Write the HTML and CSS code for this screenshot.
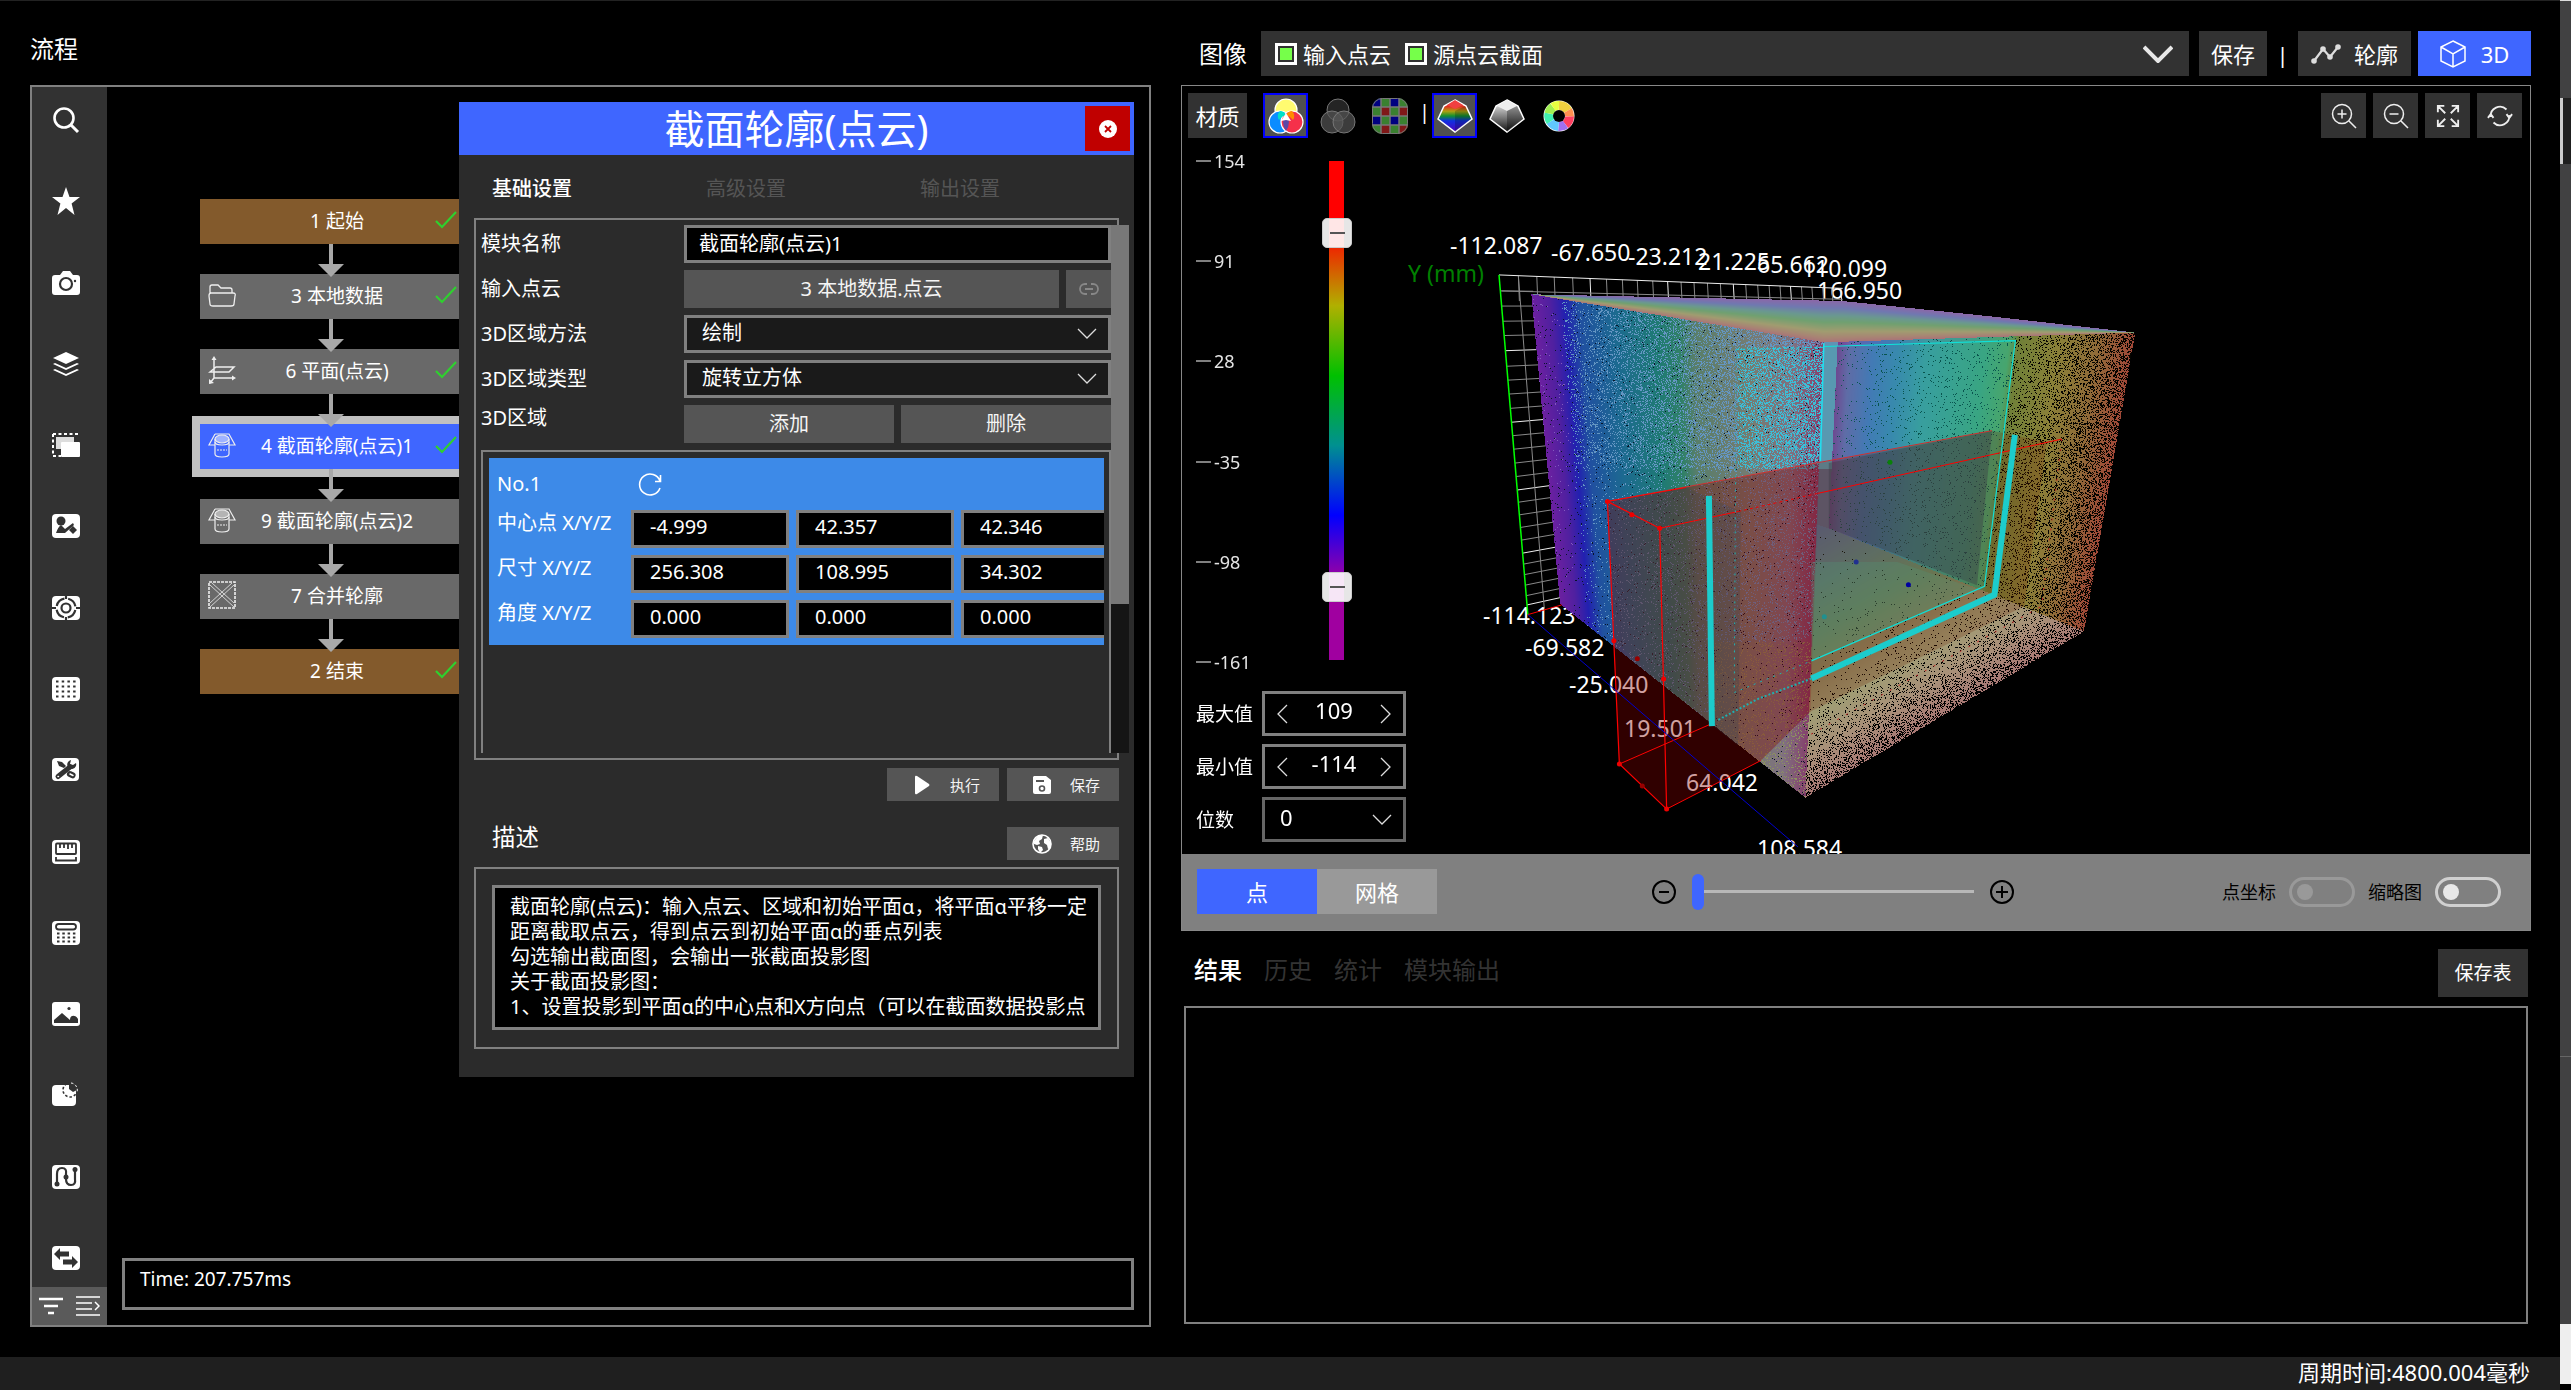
FILE: index.html
```html
<!DOCTYPE html>
<html lang="zh-CN">
<head>
<meta charset="utf-8">
<title>流程</title>
<link rel="stylesheet" href="styles.css">
</head>
<body>
<svg class="defs" aria-hidden="true">
  <symbol id="tick" viewBox="0 0 22 18"><path d="M1 10l6 6L21 1" fill="none" stroke="#2fd02f" stroke-width="2.200"/></symbol>
  <symbol id="arrow" viewBox="0 0 26 33"><path d="M11 0h4v20h11L13 33 0 20h11z" fill="#a8a8a8"/></symbol>
  <symbol id="chev" viewBox="0 0 20 12"><path d="M1 1l9 9 9-9" fill="none" stroke="#ddd" stroke-width="1.3"/></symbol>
  <symbol id="section" viewBox="0 0 28 28"><g fill="none" stroke="#eee" stroke-width="1.2"><path d="M7 3h14l6 11h-6M7 3L1 14h6"/><ellipse cx="14" cy="8" rx="7" ry="4" fill="#fff" fill-opacity=".5"/><path d="M7 8v15c0 4 14 4 14 0V8"/><path d="M7 11c0 4 14 4 14 0"/><path d="M9 19h10" stroke-dasharray="2 1"/></g></symbol>
</svg>
<div class="app">
  <div class="main">
    <div class="work">
      <section class="left">
        <h1 class="page-title">流程</h1>
        <div class="flow-panel">
          <nav class="sidebar">
            <div class="tools">
              <button aria-label="搜索"><svg viewBox="0 0 28 28"><circle cx="12" cy="12" r="9.5" fill="none" stroke="#fff" stroke-width="2.6"/><path d="M19 19l7 7" stroke="#fff" stroke-width="3"/></svg></button>
              <button aria-label="收藏"><svg viewBox="0 0 28 28"><path d="M14 0l3.500 10H28l-8.400 6.500L22.500 28 14 21 5.500 28l2.900-11.500L0 10h10.500z" fill="#fff"/></svg></button>
              <button aria-label="相机"><svg viewBox="0 0 28 28"><path d="M3 6h5l3-4h7l3 4h4q3 0 3 3v14q0 3-3 3H3q-3 0-3-3V9q0-3 3-3z" fill="#fff"/><circle cx="14" cy="15" r="6" fill="none" stroke="#323232" stroke-width="2.200"/><circle cx="23" cy="12" r="1.200" fill="#323232"/></svg></button>
              <button aria-label="图层"><svg viewBox="0 0 28 28"><path d="M14 2l13 6-13 6L1 8z" fill="#fff"/><path d="M3 13l11 5 11-5 2 1-13 6-13-6zM3 19l11 5 11-5 2 1-13 6-13-6z" fill="#fff"/></svg></button>
              <button aria-label="区域"><svg viewBox="0 0 28 28"><path d="M1 3h25M1 3v22h8" fill="none" stroke="#fff" stroke-width="2" stroke-dasharray="3 2.500"/><path d="M4 6h18v12H4z" fill="#ddd"/><rect x="9" y="11" width="19" height="15" rx="1" fill="#fff"/></svg></button>
              <button aria-label="定位"><svg viewBox="0 0 28 28"><rect y="2" width="28" height="24" rx="4" fill="#fff"/><g fill="#323232"><circle cx="9" cy="9" r="4.500"/><path d="M4 21q2-6 5-8l4 4 8-6 1 2-9 8zM17 18l4-4 4 4-4 4z"/></g></svg></button>
              <button aria-label="目标"><svg viewBox="0 0 28 28"><rect y="2" width="28" height="24" rx="4" fill="#fff"/><g fill="none" stroke="#323232" stroke-width="2.200"><circle cx="14" cy="14" r="4.500"/><circle cx="14" cy="14" r="9.500" stroke-dasharray="11 3.900" stroke-dashoffset="-2"/><path d="M14 2v3M14 23v3M0 14h4M24 14h4"/></g></svg></button>
              <button aria-label="阵列"><svg viewBox="0 0 28 28"><rect y="2" width="28" height="24" rx="4" fill="#fff"/><path d="M4 6.500h20M4 11.500h20M4 16.500h20M4 21.500h20" stroke="#323232" stroke-width="2.200" stroke-dasharray="2.500 3.200"/></svg></button>
              <button aria-label="工具"><svg viewBox="0 0 28 28"><rect y="2" width="27" height="23" rx="4" fill="#fff"/><path d="M5 5l5 1 4 4-2 2-5-2z" fill="#323232"/><path d="M6 20.500L18 11" stroke="#323232" stroke-width="5" stroke-linecap="round"/><path d="M24 7a4.500 4.500 0 1 1-5-3l-1 4 3 1z" fill="#323232"/><rect x="15" y="15.500" width="9" height="6" rx="3" transform="rotate(25 19 18)" fill="#323232"/><path d="M18 18l3 1.500M6 20.500h.5" stroke="#fff" stroke-width="1.500" stroke-linecap="round"/></svg></button>
              <button aria-label="测量"><svg viewBox="0 0 28 28"><rect y="2" width="28" height="24" rx="4" fill="#fff"/><g fill="none" stroke="#323232" stroke-width="1.800"><rect x="4" y="5.500" width="20" height="10.500" rx="1"/><path d="M8 6v4M12 6v4M16 6v5M20 6v4M4 19v3.500h20V19"/></g></svg></button>
              <button aria-label="计算"><svg viewBox="0 0 28 28"><rect y="2" width="28" height="24" rx="4" fill="#fff"/><rect x="4" y="5" width="20" height="5.500" rx="2.700" fill="none" stroke="#323232" stroke-width="1.800"/><path d="M5 14.500h19M5 18.500h19M5 22.500h19" stroke="#323232" stroke-width="2.200" stroke-dasharray="2.500 2.800"/></svg></button>
              <button aria-label="图片"><svg viewBox="0 0 28 28"><rect y="2" width="28" height="24" rx="3" fill="#fff"/><path d="M2 23v-3l8-7 8 7c0-6 6-5 8-1v4z" fill="#323232"/><circle cx="17" cy="8.500" r="1.600" fill="#323232"/></svg></button>
              <button aria-label="缺陷"><svg viewBox="0 0 28 28"><rect y="4" width="24" height="21" rx="4" fill="#fff"/><circle cx="18" cy="9" r="7" fill="none" stroke="#323232" stroke-width="1.600" stroke-dasharray="2.500 2"/><path d="M17 2v6l4 3 4-2a7 7 0 0 0-8-7z" fill="#323232"/><path d="M19 2a7 7 0 0 1 6 9" fill="none" stroke="#fff" stroke-dasharray="2.500 2"/></svg></button>
              <button aria-label="路径"><svg viewBox="0 0 28 28"><rect y="2" width="28" height="24" rx="4" fill="#fff"/><path d="M5 21V11q0-6 5-6t4 6v5q0 6 5 6t4-6V7" fill="none" stroke="#323232" stroke-width="2.200"/><circle cx="5" cy="21" r="2.500" fill="#323232"/><circle cx="14" cy="14" r="2.500" fill="#323232"/><circle cx="23" cy="6.500" r="2.500" fill="#323232"/></svg></button>
              <button aria-label="通信"><svg viewBox="0 0 28 28"><rect y="2" width="28" height="24" rx="4" fill="#fff"/><path d="M2 10l6-6v3.500h9v5H8V16zM26 18l-6 6v-3.500h-9v-5h9V12z" fill="#323232"/></svg></button>
            </div>
            <div class="side-foot">
              <button aria-label="筛选"><svg viewBox="0 0 24 18"><path d="M0 2h24M5 9h14M9 16h6" stroke="#fff" stroke-width="2.400"/></svg></button>
              <button aria-label="展开"><svg viewBox="0 0 24 20"><path d="M0 1h24M0 7h16M0 13h16M0 19h24M19 6l4 4-4 4" fill="none" stroke="#fff" stroke-width="1.500"/></svg></button>
            </div>
          </nav>
          <div class="workspace">
            <div class="flow">
              <div class="node end"><i></i><span>1 起始</span><svg><use href="#tick"/></svg></div>
              <svg class="arrow"><use href="#arrow"/></svg>
              <div class="node"><svg class="ni" viewBox="0 0 28 28"><path d="M2 12V6q0-2 2-2h6l3 3h9q2 0 2 2v3M3 12h22q3 0 2 3l-1 8q0 2-3 2H5q-3 0-3-2l-1-8q0-3 2-3z" fill="none" stroke="#eee" stroke-width="1.300"/></svg><span>3 本地数据</span><svg><use href="#tick"/></svg></div>
              <svg class="arrow"><use href="#arrow"/></svg>
              <div class="node"><svg class="ni" viewBox="0 0 28 28"><path d="M6 2v20h20M6 22l-4 5M2 16l6-5h18l-5 5z" fill="none" stroke="#eee" stroke-width="1.500"/><path d="M3.500 4L6 0l2.500 4zM24 19.500l4 2.500-4 2.500zM1 23v5l5-1z" fill="#eee"/></svg><span>6 平面(点云)</span><svg><use href="#tick"/></svg></div>
              <svg class="arrow"><use href="#arrow"/></svg>
              <div class="node active"><svg class="ni"><use href="#section"/></svg><span>4 截面轮廓(点云)1</span><svg><use href="#tick"/></svg></div>
              <svg class="arrow"><use href="#arrow"/></svg>
              <div class="node"><svg class="ni"><use href="#section"/></svg><span>9 截面轮廓(点云)2</span></div>
              <svg class="arrow"><use href="#arrow"/></svg>
              <div class="node"><svg class="ni" viewBox="0 0 28 28"><g fill="none" stroke="#eee"><rect x="1" y="1" width="26" height="26" stroke-width="1.600" stroke-dasharray="3 1"/><path d="M2 4l24 22M4 2l22 20M26 4L2 26M24 2L2 22" stroke-width=".8"/></g></svg><span>7 合并轮廓</span></div>
              <svg class="arrow"><use href="#arrow"/></svg>
              <div class="node end"><i></i><span>2 结束</span><svg><use href="#tick"/></svg></div>
            </div>
            <div class="time">Time: 207.757ms</div>

            <section class="dialog">
              <header class="dialog-head"><h2>截面轮廓(点云)</h2>
                <button class="close" aria-label="关闭"><svg viewBox="0 0 18 18"><circle cx="9" cy="9" r="9" fill="#fff"/><path d="M6 6l6 6M12 6l-6 6" stroke="#c00000" stroke-width="1.800"/></svg></button></header>
              <div class="dialog-tabs"><button class="on">基础设置</button><button>高级设置</button><button>输出设置</button></div>
              <div class="form-box">
                <div class="row"><label for="name">模块名称</label><input id="name" class="field" value="截面轮廓(点云)1"></div>
                <div class="row"><span>输入点云</span><div class="pair"><button class="btn wide">3 本地数据.点云</button><button class="btn link" aria-label="链接"><svg viewBox="0 0 20 12"><path d="M8 1H6a5 5 0 0 0 0 10h2M12 1h2a5 5 0 0 1 0 10h-2M6 6h8" fill="none" stroke="#888" stroke-width="1.800"/></svg></button></div></div>
                <div class="row"><label for="method">3D区域方法</label><span class="select"><select id="method"><option>绘制</option></select><svg><use href="#chev"/></svg></span></div>
                <div class="row"><label for="type">3D区域类型</label><span class="select"><select id="type"><option>旋转立方体</option></select><svg><use href="#chev"/></svg></span></div>
                <div class="row"><span class="raised">3D区域</span><div class="pair"><button class="btn wide">添加</button><button class="btn wide">删除</button></div></div>
                <div class="regions">
                  <div class="region">
                    <div class="region-head"><span>No.1</span><button aria-label="重置"><svg viewBox="0 0 24 24"><path d="M22 9A10.500 10.500 0 1 0 22 16M22.500 3v6.500H17" fill="none" stroke="#fff" stroke-width="1.600"/></svg></button></div>
                    <div class="xyz"><span class="raised">中心点 X/Y/Z</span><input class="field" aria-label="中心点 X" value="-4.999"><input class="field" aria-label="中心点 Y" value="42.357"><input class="field" aria-label="中心点 Z" value="42.346"></div>
                    <div class="xyz"><span class="raised">尺寸 X/Y/Z</span><input class="field" aria-label="尺寸 X" value="256.308"><input class="field" aria-label="尺寸 Y" value="108.995"><input class="field" aria-label="尺寸 Z" value="34.302"></div>
                    <div class="xyz"><span class="raised">角度 X/Y/Z</span><input class="field" aria-label="角度 X" value="0.000"><input class="field" aria-label="角度 Y" value="0.000"><input class="field" aria-label="角度 Z" value="0.000"></div>
                  </div>
                </div>
                <div class="scroll"><i></i></div>
              </div>
              <div class="actions">
                <button class="btn act"><svg viewBox="0 0 20 20"><path d="M3 2q0-2 2-1l12 8q1 1 0 2L5 19q-2 1-2-1z" fill="#fff"/></svg>执行</button>
                <button class="btn act"><svg viewBox="0 0 20 20"><path d="M2 1h12l5 4v12q0 2-2 2H3q-2 0-2-2V2z" fill="#fff"/><path d="M4 6h8" stroke="#555" stroke-width="2"/><circle cx="10" cy="13.500" r="2.500" fill="none" stroke="#555" stroke-width="1.600"/></svg>保存</button>
              </div>
              <div class="desc-head"><h3>描述</h3><button class="btn act"><svg viewBox="0 0 20 20"><circle cx="10" cy="10" r="9" fill="none" stroke="#fff" stroke-width="1.600"/><path d="M2 7l4-5 5-1-1 4-3 2 1 3-3 1-3-1zM12 5l4-1 3 5v5l-3 1-1-4-3-2zM6 12l4 1 1 3-3 3-2-4z" fill="#fff"/></svg>帮助</button></div>
              <div class="desc-box"><textarea aria-label="描述" rows="5">截面轮廓(点云)：输入点云、区域和初始平面α，将平面α平移一定
距离截取点云，得到点云到初始平面α的垂点列表
勾选输出截面图，会输出一张截面投影图
关于截面投影图：
1、设置投影到平面α的中心点和X方向点（可以在截面数据投影点</textarea></div>
            </section>
          </div>
        </div>
      </section>

      <section class="right">
        <div class="img-head">
          <h1 class="page-title">图像</h1>
          <div class="combo">
            <label><input type="checkbox" checked>输入点云</label>
            <label><input type="checkbox" checked>源点云截面</label>
            <svg viewBox="0 0 30 18"><path d="M1 2l14 14L29 2" fill="none" stroke="#e8e8e8" stroke-width="4"/></svg>
          </div>
          <button class="dark save">保存</button><span class="bar">|</span>
          <div class="modes"><button class="dark"><svg viewBox="0 0 30 22"><path d="M3 18L12 6l7 8L27 4" fill="none" stroke="#ddd" stroke-width="2.200"/><g fill="#ddd"><circle cx="3" cy="18" r="2.800"/><circle cx="12" cy="6" r="2.800"/><circle cx="19" cy="14" r="2.800"/><circle cx="27" cy="4" r="2.800"/></g></svg>轮廓</button>
          <button class="dark blue"><svg class="cube" viewBox="0 0 26 28"><path d="M13 1l12 6v14l-12 6L1 21V7zM1 7l12 7 12-7M13 14v13" fill="none" stroke="#fff" stroke-width="1.500"/></svg>3D</button></div>
        </div>

        <div class="viewer">
          <div class="view-body">
            <div class="scene">
              <svg class="labels" viewBox="0 0 1348 769">
                <g class="axis">
                  <text x="268" y="168">-112.087</text><text x="369" y="175">-67.650</text><text x="446" y="179">-23.212</text><text x="516" y="184">21.225</text><text x="575" y="187">65.662</text><text x="620" y="191">110.099</text><text x="635" y="213">166.950</text>
                  <text x="226" y="196" class="ylab">Y (mm)</text>
                  <text x="301" y="538">-114.123</text><text x="343" y="570">-69.582</text><text x="387" y="607">-25.040</text><text x="442" y="651">19.501</text><text x="504" y="705">64.042</text><text x="575" y="771">108.584</text>
                </g>
              </svg>
              <canvas id="cloud" width="780" height="655"></canvas>
            </div>
            <div class="toolbar">
              <button class="dark mat">材质</button>
              <div class="icons">
                <button class="ic on" aria-label="彩色"><svg viewBox="0 0 36 36"><g stroke="#fff" stroke-width="1.200"><circle cx="18" cy="12" r="11" fill="#fffb70"/><circle cx="12" cy="24" r="11" fill="#0a8cff"/><circle cx="24" cy="24" r="11" fill="#f5304a"/></g><path d="M12 13q4 0 6 4-4 1-7 5-3-5 1-9z" fill="#00e0c8"/><path d="M24 13q-4 0-6 4 4 1 7 5 3-5-1-9z" fill="#ff8c00"/><path d="M18 16q6 8 0 17-6-9 0-17z" fill="#5a48a8"/><path d="M18 15l5 8-5-1-5 1z" fill="#fff"/></svg></button>
                <button class="ic" aria-label="灰色"><svg viewBox="0 0 36 36"><g stroke="#777" fill="#555" fill-opacity=".7"><circle cx="18" cy="12" r="11" fill="#333"/><circle cx="12" cy="24" r="11"/><circle cx="24" cy="24" r="11"/></g></svg></button>
                <button class="ic" aria-label="网格纹理"><svg viewBox="0 0 36 36"><clipPath id="rc"><rect width="36" height="36" rx="10"/></clipPath><g clip-path="url(#rc)"><path fill="#3a8030" d="M0 0h36v36H0z"/><path fill="#000080" d="M0 0h9v9H0zM18 0h9v9h-9zM0 18h9v9H0zM18 18h9v9h-9z"/><path fill="#801818" d="M9 9h9v9H9zM27 9h9v9h-9zM9 27h9v9H9zM27 27h9v9h-9z"/><path d="M9 0v36M18 0v36M27 0v36M0 9h36M0 18h36M0 27h36" stroke="#777" stroke-width="1.500"/></g><rect x=".5" y=".5" width="35" height="35" rx="10" fill="none" stroke="#777"/></svg></button>
                <span class="bar thin">|</span>
                <button class="ic on" aria-label="彩色渐变"><svg viewBox="0 0 36 34"><defs><linearGradient id="g1" x2="0" y2="1"><stop offset=".2" stop-color="#e03020"/><stop offset=".35" stop-color="#b0a010"/><stop offset=".5" stop-color="#109030"/><stop offset=".65" stop-color="#1030e0"/><stop offset="1" stop-color="#5000c0"/></linearGradient></defs><path d="M18 1l11 6 6 13-17 13L1 20 7 7z" fill="url(#g1)" stroke="#fff" stroke-width="1.500"/><path d="M18 1l8 5-8 4-8-4z" fill="#f04040"/><path d="M18 12v21l16-13-6-13z" fill="#000" opacity=".2"/></svg></button>
                <button class="ic" aria-label="灰度渐变"><svg viewBox="0 0 36 34"><defs><linearGradient id="g2" x2="0" y2="1"><stop offset=".2" stop-color="#ccc"/><stop offset="1" stop-color="#111"/></linearGradient></defs><path d="M18 1l11 6 6 13-17 13L1 20 7 7z" fill="url(#g2)" stroke="#fff" stroke-width="1.500"/><path d="M18 1l10 6-10 5L8 7z" fill="#eee"/><path d="M18 12v21l16-13-6-13z" fill="#000" opacity=".3"/></svg></button>
                <button class="ic ring" aria-label="色环"><svg viewBox="0 0 32 32"><circle cx="16" cy="16" r="15.500" fill="#fff"/><g fill="none" stroke-width="9"><path d="M16 5.500a10.500 10.500 0 0 1 9 5" stroke="#f0d040"/><path d="M25 10.500a10.500 10.500 0 0 1 1.500 6" stroke="#ff9050"/><path d="M26.500 16.500a10.500 10.500 0 0 1-4 8" stroke="#ff4060"/><path d="M22.500 24.500a10.500 10.500 0 0 1-7 2" stroke="#a070f0"/><path d="M15.500 26.500a10.500 10.500 0 0 1-8-5" stroke="#60c8ff"/><path d="M7.500 21.500a10.500 10.500 0 0 1-1.500-8" stroke="#40f0b0"/><path d="M6 13.500a10.500 10.500 0 0 1 4-6.500" stroke="#a0f050"/><path d="M10 7a10.500 10.500 0 0 1 6-1.500" stroke="#e8ff40"/></g><circle cx="16" cy="16" r="6" fill="#000"/></svg></button>
              </div>
              <div class="zoomers">
                <button class="dark" aria-label="放大"><svg viewBox="0 0 26 26"><circle cx="11" cy="11" r="9.500"/><path d="M18 18l7 7M6.500 11h9M11 6.500v9"/></svg></button>
                <button class="dark" aria-label="缩小"><svg viewBox="0 0 26 26"><circle cx="11" cy="11" r="9.500"/><path d="M18 18l7 7M6.500 11h9"/></svg></button>
                <button class="dark" aria-label="适应"><svg class="bold" viewBox="0 0 26 26"><path d="M2 9V2h7M17 2h7v7M24 17v7h-7M9 24H2v-7M2 2l8 8M24 2l-8 8M24 24l-8-8M2 24l8-8"/></svg></button>
                <button class="dark" aria-label="刷新"><svg viewBox="0 0 28 26"><path d="M4 14A10 10 0 0 1 21 6M24 12A10 10 0 0 1 7 20M1 15l3-4 3 4M27 11l-3 4-3-4" stroke-width="2"/></svg></button>
              </div>
            </div>
            <div class="scale">
              <ul><li>154</li><li>91</li><li>28</li><li>-35</li><li>-98</li><li>-161</li></ul>
              <div class="rail"><input type="range" min="-161" max="154" value="109" aria-label="最大值"><input type="range" min="-161" max="154" value="-114" aria-label="最小值"></div>
            </div>
            <div class="limits">
              <label for="max">最大值</label><div class="spin"><button aria-label="减"><svg viewBox="0 0 11 20"><path d="M10 1L1 10l9 9"/></svg></button><input id="max" value="109"><button aria-label="加"><svg viewBox="0 0 11 20"><path d="M1 1l9 9-9 9"/></svg></button></div>
              <label for="min">最小值</label><div class="spin"><button aria-label="减"><svg viewBox="0 0 11 20"><path d="M10 1L1 10l9 9"/></svg></button><input id="min" value="-114"><button aria-label="加"><svg viewBox="0 0 11 20"><path d="M1 1l9 9-9 9"/></svg></button></div>
              <label for="dig">位数</label><span class="select digits"><select id="dig"><option>0</option></select><svg><use href="#chev"/></svg></span>
            </div>
          </div>
          <div class="view-foot">
            <div class="seg"><button class="on">点</button><button>网格</button></div>
            <div class="size">
              <button aria-label="减小"><svg viewBox="0 0 24 24"><circle cx="12" cy="12" r="11"/><path d="M7 12h10"/></svg></button>
              <input type="range" value="0" aria-label="点大小">
              <button aria-label="增大"><svg viewBox="0 0 24 24"><circle cx="12" cy="12" r="11"/><path d="M6 12h12M12 6v12"/></svg></button>
            </div>
            <div class="switches"><label for="s1">点坐标</label><input id="s1" type="checkbox" class="dim" disabled><label for="s2">缩略图</label><input id="s2" type="checkbox"></div>
          </div>
        </div>

        <div class="result-head"><div class="result-tabs"><button class="on">结果</button><button>历史</button><button>统计</button><button>模块输出</button></div><button class="dark save-table">保存表</button></div>
        <div class="result-box"></div>
      </section>
    </div>
    <footer class="status">周期时间:4800.004毫秒</footer>
  </div>
  <aside class="edge"><i class="e1"></i><i class="e2"></i><i class="e3"></i><i class="e4"></i><i class="e5"></i></aside>
</div>
<script src="cloud.js"></script>
</body>
</html>
```
FILE: styles.css
```css
* { box-sizing: border-box; }
body { margin: 0; background: #000; color: #fff; font: 20px/24px "Noto Sans", "Noto Sans CJK SC", sans-serif; }
h1, h2, h3, ul { margin: 0; padding: 0; font-weight: 400; list-style: none; }
button, input, select, textarea { font: inherit; color: inherit; border: 0; padding: 0; margin: 0; background: none; border-radius: 0; appearance: none; outline: 0; }
button { display: flex; align-items: center; justify-content: center; white-space: nowrap; }
svg { display: block; flex: none; }
.defs { position: absolute; width: 0; height: 0; }

.app { display: grid; grid-template-columns: minmax(0, 1fr) 11px; min-height: 100vh; }
.main { display: flex; flex-direction: column; border-top: 1px solid #222; }
.work { flex: 1; display: grid; grid-template-columns: minmax(0, 1121fr) minmax(0, 1350fr); gap: 30px; padding: 0 29px 30px 30px; }
.left, .right { display: flex; flex-direction: column; min-width: 0; }
.page-title { font-size: 24px; line-height: 30px; }
.left > .page-title { padding: 33px 0 21px; }
.status { height: 33px; background: #1f1f1f; padding-right: 30px; text-align: right; font-size: 22px; line-height: 31px; }
.edge { display: flex; flex-direction: column; background: #414142; }
.e1 { height: 1px; background: #ddd; }
.e2 { height: 66px; margin-top: 97px; background: #1f1f1f; border-left: 3px solid #ccc; }
.e3 { height: 1px; margin-top: 892px; background: #666; }
.e4 { flex: 1; margin-top: 267px; background: #eee; }
.e5 { height: 6px; background: #000; }

/* flow */
.flow-panel { flex: 1; display: grid; grid-template-columns: 75px minmax(0, 1fr); border: 2px solid #808080; }
.sidebar { display: flex; flex-direction: column; background: #323232; }
.tools { flex: 1; display: flex; flex-direction: column; justify-content: space-between; padding: 19px 8px 15px 0; }
.tools svg { width: 28px; height: 28px; }
.side-foot { height: 38px; background: #5a5a5a; display: flex; justify-content: space-around; }
.side-foot svg { width: 24px; height: 20px; }
.workspace { position: relative; display: flex; flex-direction: column; }
.flow { flex: 1; display: flex; flex-direction: column; padding: 112px 0 0 93px; font-size: 19px; }
.node { display: grid; grid-template-columns: 44px 1fr 32px; align-items: center; justify-items: center; width: 262px; height: 45px; background: #696969; }
.node.end { background: #835a2c; }
.node.active { background: #3f66ff; box-shadow: 0 0 0 8px #c0c0c0; }
.node svg { width: 22px; height: 18px; margin-bottom: 4px; }
.node .ni { width: 28px; height: 28px; }
.node span { white-space: nowrap; padding-bottom: 2px; }
.arrow { width: 26px; height: 33px; margin: 0 0 -3px 118px; position: relative; z-index: 1; }
.time { margin: 0 15px 15px 15px; height: 52px; border: 3px solid #808080; padding: 6px 15px; font-size: 19px; }

/* floating settings window */
.dialog { position: absolute; left: 352px; right: 15px; top: 15px; z-index: 2; background: #2b2b2b; padding-bottom: 28px; }
.dialog-head { display: grid; grid-template-columns: 49px 1fr 45px; align-items: center; height: 53px; background: #3f66ff; padding-right: 4px; }
.dialog-head h2 { grid-column: 2; font-size: 40px; line-height: 53px; text-align: center; }
.close { height: 45px; background: #c00000; }
.close svg { width: 18px; height: 18px; }
.dialog-tabs { display: flex; height: 63px; padding: 5px 0 0 33px; color: #555; }
.dialog-tabs button { width: 215px; justify-content: flex-start; }
.dialog-tabs .on { color: #fff; font-weight: 500; }
.form-box { position: relative; display: flex; flex-direction: column; gap: 7px; min-height: 542px; margin: 0 15px; padding: 5px 6px 5px 5px; border: 2px solid #808080; }
.row { display: grid; grid-template-columns: 203px minmax(0, 1fr); align-items: center; height: 38px; }
.raised { padding-bottom: 12px; white-space: nowrap; }
.field { width: 100%; height: 38px; background: #000; border: 3px solid #808080; padding: 0 12px 4px; min-width: 0; }
.pair { display: flex; gap: 7px; }
.btn { background: #555; color: #f4f4f4; height: 38px; }
.wide { flex: 1; }
.link { width: 45px; }
.link svg { width: 20px; height: 12px; }
.select { position: relative; display: block; }
.select select { display: block; width: 100%; height: 38px; border: 3px solid #808080; background: #1a1a1a; padding: 0 15px 3px; }
.select svg { position: absolute; right: 14px; top: 13px; width: 20px; height: 12px; pointer-events: none; }
.regions { flex: 1; border: 2px solid #808080; border-bottom: 0; padding: 6px 5px 0 6px; }
.region { display: flex; flex-direction: column; gap: 7px; background: #3d8ae8; padding: 0 0 7px 8px; overflow: hidden; }
.region-head { display: flex; align-items: center; height: 45px; padding-top: 7px; }
.region-head span { width: 141px; }
.region-head svg { width: 24px; height: 24px; }
.xyz { display: grid; grid-template-columns: 127px 158px 158px 158px; align-items: center; column-gap: 7px; height: 38px; }
.xyz .raised { margin-right: -7px; }
.xyz .field { padding: 0 15px 6px 16px; }
.scroll { position: absolute; right: -12px; top: 5px; bottom: 5px; width: 18px; background: #151515; }
.scroll i { display: block; height: 379px; background: #787878; }
.actions { display: flex; justify-content: flex-end; gap: 8px; margin: 8px 15px 0; }
.act { width: 112px; height: 33px; gap: 18px; padding-left: 6px; font-size: 15px; }
.act svg { width: 20px; height: 20px; }
.desc-head { display: flex; justify-content: space-between; margin: 26px 15px 7px 33px; }
.desc-head h3 { line-height: 20px; }
.desc-box { margin: 0 15px; padding: 16px 16px 17px; border: 2px solid #808080; }
.desc-box textarea { display: block; width: 100%; height: 145px; padding: 6px 3px 0 15px; line-height: 25px; background: #000; border: 3px solid #808080; resize: none; overflow: hidden; }

/* image header */
.dark { background: #323232; height: 45px; font-size: 22px; }
.img-head { display: flex; align-items: center; padding: 30px 0 9px 18px; }
.combo { flex: 1; display: flex; align-items: center; gap: 14px; height: 45px; margin: 0 10px 0 14px; padding: 0 16px 0 14px; background: #323232; font-size: 22px; }
.combo label { display: flex; align-items: center; gap: 6px; }
.combo input { width: 22px; height: 22px; border: 3px solid #fff; padding: 2px; background: #76ff4a content-box; }
.combo svg { width: 30px; height: 18px; margin-left: auto; }
.save { width: 68px; }
.bar { width: 31px; text-align: center; font-size: 22px; }
.modes { display: flex; gap: 7px; }
.modes button { width: 113px; gap: 13px; }
.modes svg { width: 30px; height: 22px; }
.modes .cube { width: 26px; height: 28px; }
.modes .blue { background: #3f66ff; gap: 15px; }

/* viewer */
.viewer { flex: 848 1 0; display: flex; flex-direction: column; border: 1px solid #888; }
.view-body { flex: 1; position: relative; overflow: hidden; }
.scene { position: absolute; inset: 0; }
.labels { position: absolute; left: 0; top: 0; width: 1348px; height: 769px; }
.axis { fill: #fff; font-size: 23px; }
.ylab { fill: #008000; }
.scene canvas { position: absolute; left: 218px; top: 114px; }
.toolbar { position: relative; display: flex; padding: 7px 8px 0 6px; }
.mat { width: 59px; }
.icons { display: flex; align-items: center; gap: 7px; margin-left: 16px; }
.ic { width: 45px; height: 45px; border: 2px solid transparent; }
.ic.on { background: #505050; border-color: #0000ff; }
.ic svg { width: 36px; height: 36px; }
.ic.ring svg { width: 32px; height: 32px; }
.thin { width: 6px; margin-top: -8px; font-size: 20px; }
.zoomers { display: flex; gap: 7px; margin-left: auto; }
.zoomers button { width: 45px; }
.zoomers svg { width: 26px; height: 26px; fill: none; stroke: #eee; stroke-width: 1.5; }
.zoomers .bold { stroke-width: 2; width: 24px; height: 24px; }
.scale { position: relative; display: flex; height: 521px; margin-top: 13px; padding-left: 14px; }
.scale ul { display: flex; flex-direction: column; justify-content: space-between; width: 133px; font-size: 18px; color: #e4e4e4; }
.scale li { display: flex; align-items: center; gap: 3px; line-height: 20px; }
.scale li::before { content: ""; width: 15px; height: 2px; background: #808080; }
.rail { position: relative; width: 15px; height: 499px; margin-top: 10px; background: linear-gradient(#f00 14%, #b0b000 29%, #00c000 43%, #009090 57%, #00f 71%, #a000a0 84%); }
.rail input { position: absolute; left: -7px; top: -14px; width: 30px; height: 529px; writing-mode: vertical-lr; direction: rtl; pointer-events: none; }
.rail input::-webkit-slider-thumb { appearance: none; width: 30px; height: 30px; border: 1px solid #ccc; border-radius: 5px; background: linear-gradient(#555, #555) center / 15px 2px no-repeat, rgba(255, 255, 255, .9); pointer-events: auto; }
.limits { position: relative; display: grid; grid-template-columns: 66px 144px; row-gap: 8px; align-items: center; margin-top: 19px; padding-left: 14px; font-size: 19px; }
.spin { display: flex; align-items: center; justify-content: space-between; height: 45px; border: 3px solid #808080; padding: 0 12px; font-size: 22px; }
.spin input { width: 70px; height: 36px; text-align: center; padding-bottom: 7px; }
.spin svg { width: 11px; height: 20px; fill: none; stroke: #ddd; stroke-width: 1.3; }
.digits select { height: 45px; border-color: #666; background: #000; font-size: 22px; padding-bottom: 5px; }
.digits svg { top: 17px; }
.view-foot { display: flex; align-items: center; height: 76px; padding: 0 29px 0 15px; background: #808080; }
.seg { display: flex; font-size: 22px; }
.seg button { width: 120px; height: 45px; background: #999; }
.seg .on { background: #3f66ff; }
.size { display: flex; align-items: center; gap: 16px; margin-left: 215px; }
.size svg { width: 24px; height: 24px; fill: none; stroke: #000; stroke-width: 2; }
.size input { width: 282px; height: 36px; background: linear-gradient(#b8b8b8, #b8b8b8) center / 100% 3px no-repeat; }
.size input::-webkit-slider-thumb { appearance: none; width: 12px; height: 36px; border-radius: 6px; background: #3f66ff; }
.switches { display: flex; align-items: center; gap: 13px; margin-left: auto; color: #000; font-size: 18px; }
.switches input { width: 66px; height: 30px; border: 3px solid #d0d0d0; border-radius: 15px; padding: 4px 5px; color: #e8e8e8; }
.switches input::before { content: ""; display: block; width: 16px; height: 16px; border-radius: 8px; background: currentColor; }
.switches .dim { border-color: #999; color: #999; }

/* results */
.result-head { display: flex; align-items: center; justify-content: space-between; padding: 18px 3px 9px 13px; }
.result-tabs { display: flex; gap: 22px; padding-bottom: 6px; font-size: 24px; color: #333; }
.result-tabs .on { color: #fff; font-weight: 500; }
.save-table { width: 90px; height: 48px; font-size: 19px; }
.result-box { flex: 316 1 0; margin: 0 3px 3px; border: 2px solid #808080; }
```
FILE: cloud.js
```js
// Point cloud view: faces are sampled per pixel on a 1568-unit design square.
(function () {
  var cv = document.getElementById('cloud'), c = cv.getContext('2d');
  var SX = 780 / 1568, SY = 660 / 1568, W = cv.width, H = cv.height;
  var seed = 7;
  function rnd() { seed = (seed * 1664525 + 1013904223) >>> 0; return seed / 4294967296; }
  function hex(h) { return [parseInt(h.substr(1, 2), 16), parseInt(h.substr(3, 2), 16), parseInt(h.substr(5, 2), 16)]; }
  function ramp(stops) {
    stops = stops.map(function (s) { return [s[0], hex(s[1])]; });
    return function (t) {
      if (t <= stops[0][0]) return stops[0][1];
      for (var i = 1; i < stops.length; i++) if (t <= stops[i][0]) {
        var a = stops[i - 1], b = stops[i], k = (t - a[0]) / (b[0] - a[0]);
        return [0, 1, 2].map(function (n) { return a[1][n] + (b[1][n] - a[1][n]) * k; });
      }
      return stops[stops.length - 1][1];
    };
  }
  function inside(p, x, y) {
    for (var i = 0, j = p.length - 1, r = false; i < p.length; j = i++)
      if ((p[i][1] > y) !== (p[j][1] > y) && x < (p[j][0] - p[i][0]) * (y - p[i][1]) / (p[j][1] - p[i][1]) + p[i][0]) r = !r;
    return r;
  }
  function lerpAt(a, b, v, axis) { var k = (v - a[axis]) / (b[axis] - a[axis]); return a[1 - axis] + (b[1 - axis] - a[1 - axis]) * k; }
  var img = c.createImageData(W, H);
  function face(poly, shade) {
    for (var py = 0; py < H; py++) for (var px = 0; px < W; px++) {
      var x = (px + .5) / SX, y = (py + .5) / SY;
      if (!inside(poly, x, y)) continue;
      var s = shade(x, y); if (!s) continue;
      var o = (py * W + px) * 4;
      img.data[o] = s[0]; img.data[o + 1] = s[1]; img.data[o + 2] = s[2]; img.data[o + 3] = 255;
    }
  }
  function path(p) { c.beginPath(); p.forEach(function (q, i) { c[i ? 'lineTo' : 'moveTo'](q[0] * SX, q[1] * SY); }); }
  function line(p, col, w, dash) { path(p); c.strokeStyle = col; c.lineWidth = w || 1; c.setLineDash(dash || []); c.stroke(); }
  function fill(p, col) { path(p); c.closePath(); c.fillStyle = col; c.fill(); }
  function dot(x, y, col) { c.beginPath(); c.arc(x * SX, y * SY, 2.5, 0, 7); c.fillStyle = col; c.fill(); }

  var A = [264, 224], B = [1478, 315], K = [852, 338], D = [1375, 1025], E = [815, 1420], F = [322, 960], BK = [862, 780];

  // back wall
  var wall = ramp([[0, '#7a3a90'], [.04, '#6a60a8'], [.12, '#4a70b8'], [.2, '#3f80b0'], [.3, '#3f98a0'], [.5, '#40a080'], [.58, '#50a068'], [.61, '#6f8038'], [.75, '#8a8038'], [.88, '#8f6a38'], [1, '#a04838']]);
  face([[845, 338], B, D, BK, [833, 790]], function (x, y) {
    var l = lerpAt([880, 335], BK, y, 1), r = lerpAt(B, D, y, 1), u = (x - l) / (r - l);
    if (u < 0) return y < 640 ? [98, 146, 180] : [100, 90, 130];
    var dark = u > .6 ? .1 + (u - .6) * .7 : .03 + u * .05;
    if (rnd() < dark) return u > .6 ? [5, 4, 0] : [10, 70, 70];
    return wall(u);
  });
  // floor
  var floor = ramp([[0, '#5f6490'], [.2, '#647c80'], [.4, '#708a68'], [.55, '#8f8660'], [.7, '#a09c74'], [.85, '#a89078'], [1, '#a87874']]);
  face([[836, 770], BK, D, E], function (x, y) {
    var dx = x - 850, dy = y - 780, t = (dx * 395 + dy * 560) / (525 * 395 + 245 * 560);
    if (rnd() < .01 + Math.pow(Math.max(0, t), 5) * .4) return [0, 0, 0];
    return floor(t);
  });
  // left side
  var side = ramp([[0, '#6c20a0'], [.06, '#5020a0'], [.11, '#2220b0'], [.16, '#2050a0'], [.28, '#1c6a90'], [.42, '#1e7a74'], [.5, '#308068'], [.55, '#587e6a'], [.75, '#767c72'], [.9, '#807080'], [1, '#85406c']]);
  face([A, K, E, F], function (x, y) {
    var l = lerpAt(A, F, y, 1), r = lerpAt(K, E, y, 1), u = (x - l) / (r - l), n = rnd();
    var d = u < .1 ? .02 : u > .5 && u < .62 ? .28 : Math.min(.42, .08 + u * .4);
    if (y > 640) d *= .35;
    if (n < d) {
      if (x > 680 && y > 350 && y < 640) return [60, 190, 215];
      if (y > 1050 && u > .6) return [140, 145, 95];
      return u < .1 ? [130, 90, 190] : [100, 150, 195];
    }
    if (rnd() < .02) return [8, 20, 40];
    return side(u);
  });
  // top side
  var top = ramp([[0, '#8a68a8'], [.18, '#7078b0'], [.36, '#6a9890'], [.52, '#70a070'], [.74, '#a09c70'], [.9, '#a88474'], [1, '#a87478']]);
  face([A, [890, 240], [1200, 278], B, K], function (x, y) {
    var t = x < 890 ? lerpAt(A, [890, 240], x, 0) : lerpAt([890, 240], B, x, 0);
    var b = x < 852 ? lerpAt(A, K, x, 0) : lerpAt(K, B, x, 0);
    return top((y - t) / (b - t));
  });
  c.putImageData(img, 0, 0);

  // reference grid behind the cloud
  c.globalCompositeOperation = 'destination-over';
  line([[199, 178], [890, 210]], '#eee');
  line([[204, 216], [890, 236]], '#888');
  line([[238, 182], [290, 970]], '#888');
  [238, 275, 310, 347, 382, 415, 447, 477, 508, 538, 565, 591, 618, 644, 670, 695, 719, 742, 764, 785, 807, 828, 850, 868, 886].forEach(function (x, i) {
    var y = 178 + (x - 199) * .0463; line([[x, y], [x + 2, 240]], i % 5 === 4 ? '#eee' : '#888');
  });
  [216, 252, 288, 322, 358, 395, 428, 461, 495, 528, 560, 592, 625, 657, 689, 718, 748, 778, 808, 839, 865, 890, 915, 940, 962].forEach(function (y, i) {
    var x = lerpAt([199, 178], [257, 985], y, 1);
    line([[x, y], [x + 66, y - (y - 250) * .024]], i % 5 === 4 ? '#eee' : '#888');
  });
  c.globalCompositeOperation = 'source-over';
  line([[199, 178], [257, 985]], '#00ff00', 1.5);
  line([[257, 985], [325, 962]], '#f00');

  // section plane
  fill([[852, 348], [1237, 334], [1175, 918], [827, 1095]], 'rgba(0,220,160,.1)');
  // region box: side part, then the part over the wall and floor
  fill([[417, 716], [843, 624], [825, 1215], [725, 1332], [536, 1447], [441, 1340]], 'rgba(130,0,0,.37)');
  fill([[843, 624], [1190, 548], [1300, 575], [1255, 965], [825, 1215]], 'rgba(110,30,0,.24)');
  fill([[417, 716], [575, 683], [685, 740], [680, 1296], [625, 1245], [430, 1047]], 'rgba(60,70,80,.3)');
  fill([[862, 625], [1190, 548], [1160, 915], [862, 780]], 'rgba(60,60,70,.42)');
  fill([[827, 860], [1000, 860], [1160, 925], [827, 1095]], 'rgba(80,150,120,.3)');
  line([[417, 716], [1190, 548]], '#d03030');
  line([[417, 716], [575, 683]], '#f00');
  line([[522, 780], [680, 740]], '#f00');
  line([[680, 740], [840, 697]], '#e00', 1, [3, 3]);
  line([[840, 697], [1330, 568]], '#f00');
  line([[1330, 568], [1290, 965], [825, 1270]], '#c02020', 1, [2, 8]);
  line([[417, 716], [522, 780], [536, 1447], [441, 1340], [417, 716]], '#f00', 1.2);
  line([[441, 1340], [625, 1245]], '#f00');
  line([[536, 1447], [725, 1332]], '#f00');
  line([[257, 985], [322, 1052]], '#0000d0');
  line([[322, 1052], [800, 1537]], '#0000d0');

  // section lines
  line([[852, 348], [1237, 334], [1175, 918], [827, 1095]], '#10e0d8', 1.2);
  line([[852, 340], [845, 620]], '#20e0f0', 1.5);
  line([[676, 355], [852, 350]], '#20d0e0', 1, [3, 3]);
  line([[676, 355], [672, 1170], [827, 1095]], '#20b0b0', 1, [2, 5]);
  line([[640, 1235], [720, 1185], [827, 1137]], '#20b0b0', 2, [2, 2]);
  c.lineJoin = 'round';
  line([[621, 703], [627, 1250]], '#1ccccc', 6);
  line([[1236, 558], [1195, 938], [827, 1137]], '#1ccccc', 6);

  [[417, 716], [466, 748], [522, 780], [430, 1047], [530, 1138], [441, 1340], [536, 1447]].forEach(function (p) { dot(p[0], p[1], '#f00000'); });
  dot(477, 1090, '#900'); dot(487, 1392, '#900');
  dot(985, 623, '#0a800a'); dot(917, 860, '#203090'); dot(1022, 914, '#0000a0'); dot(853, 990, '#209090');
})();
```
